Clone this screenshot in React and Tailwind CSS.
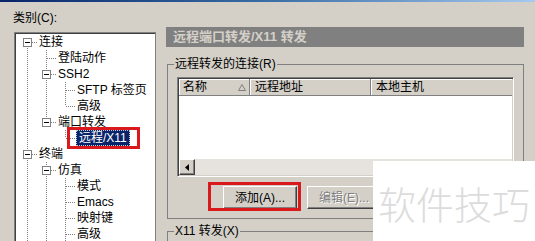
import React from 'react';

const tree = [
  { label: '连接', guides: [], open: true, first: true, last: false },
  { label: '登陆动作', guides: [true], open: false, last: false },
  { label: 'SSH2', guides: [true], open: true, last: false },
  { label: 'SFTP 标签页', guides: [true, true], open: false, last: false },
  { label: '高级', guides: [true, true], open: false, last: true },
  { label: '端口转发', guides: [true], open: true, last: true },
  { label: '远程/X11', guides: [true, false], open: false, last: true, selected: true },
  { label: '终端', guides: [], open: true, last: false },
  { label: '仿真', guides: [true], open: true, last: false },
  { label: '模式', guides: [true, true], open: false, last: false },
  { label: 'Emacs', guides: [true, true], open: false, last: false },
  { label: '映射键', guides: [true, true], open: false, last: false },
  { label: '高级', guides: [true, true], open: false, last: false },
];

// one 19x16 cell of the tree's dotted guide lines
const GuideCell = ({ line }) => (
  <svg width="19" height="16" className="shrink-0">
    {line && <line x1="9.5" y1="0" x2="9.5" y2="16" stroke="#808080" strokeDasharray="1 1" />}
  </svg>
);

const ConnectorCell = ({ first, last, open }) => (
  <svg width="19" height="16" className="shrink-0">
    {!first && <line x1="9.5" y1="0" x2="9.5" y2="8" stroke="#808080" strokeDasharray="1 1" />}
    {!last && <line x1="9.5" y1="8" x2="9.5" y2="16" stroke="#808080" strokeDasharray="1 1" />}
    <line x1="10" y1="8.5" x2="19" y2="8.5" stroke="#808080" strokeDasharray="1 1" />
    {open && (
      <>
        <rect x="5.5" y="4.5" width="8" height="8" fill="#fff" stroke="#808080" />
        <line x1="7" y1="8.5" x2="12" y2="8.5" stroke="#000" />
      </>
    )}
  </svg>
);

const TreeRow = ({ item }) => (
  <div className="flex items-center h-[16px]">
    {item.guides.map((g, i) => (
      <GuideCell key={i} line={g} />
    ))}
    <ConnectorCell first={item.first} last={item.last} open={item.open} />
    {item.selected ? (
      <span className="relative ml-[1px] px-[2px] h-[16px] leading-[16px] bg-[#0a246a] text-white border border-dotted border-[#c8c8d8] whitespace-nowrap flex items-center">
        {item.label}
        <span className="absolute -left-[10px] -right-[11px] -top-[4px] -bottom-[4px] border-[3px] border-[#d9191c]"></span>
      </span>
    ) : (
      <span className="ml-[1px] px-[1px] leading-[15px] text-black whitespace-nowrap">{item.label}</span>
    )}
  </div>
);

const raised =
  'border border-t-white border-l-white border-r-[#404040] border-b-[#404040] shadow-[inset_-1px_-1px_0_#808080]';

const App = () => {
  return (
    <div className="relative w-[535px] h-[241px] overflow-hidden bg-[#d4d0c8] text-[12px] text-black font-['Liberation_Sans','Noto_Sans_CJK_SC',sans-serif]">
      {/* window edge */}
      <div className="h-[2px] bg-gradient-to-r from-[#0a246a] via-[#3a6ea5] to-[#a6caf0]"></div>

      <div className="flex">
        {/* Category tree */}
        <div className="w-[166px] shrink-0 pl-[14px]">
          <div className="mt-[9px] -ml-[1px] leading-[14px] mb-[7px]">类别(C):</div>
          <div className="w-[142px] h-[220px] bg-white border border-[#808080] shadow-[inset_1px_1px_0_#404040] pl-[3px] pt-[1px]">
            {tree.map((item, i) => (
              <TreeRow key={i} item={item} />
            ))}
          </div>
        </div>

        {/* Right panel */}
        <div className="flex-1 pt-[25px]">
          <div className="w-[358px] h-[20px] bg-[#808080] pl-[7px] leading-[20px] text-[13px] font-bold text-[#d4d0c8]">
            远程端口转发/X11 转发
          </div>

          <fieldset className="mt-[10px] ml-[1px] w-[356px] border border-[#808080] px-[9px] pt-[6px] pb-[9px]">
            <legend className="-ml-[3px] px-[1px] leading-[14px]">远程转发的连接(R)</legend>

            <div className="w-[337px] h-[100px] flex flex-col bg-white border border-t-[#808080] border-l-[#808080] border-r-white border-b-white shadow-[inset_1px_1px_0_#404040,inset_-1px_-1px_0_#d4d0c8] p-[1px]">
              <div className="flex h-[17px] bg-[#d4d0c8] shrink-0">
                <div className="relative w-[71px] border-r border-b border-[#808080] shadow-[inset_1px_1px_0_#fff] pl-[4px] leading-[16px]">
                  名称
                  <svg width="8" height="7" className="absolute right-[3px] top-[5px]">
                    <polyline points="0.5,6.5 4,0.5 7.5,6.5 0.5,6.5" fill="none" stroke="#808080" />
                  </svg>
                </div>
                <div className="w-[121px] border-r border-b border-[#808080] shadow-[inset_1px_1px_0_#fff] pl-[5px] leading-[16px]">
                  远程地址
                </div>
                <div className="flex-1 border-b border-[#808080] shadow-[inset_1px_1px_0_#fff] pl-[5px] leading-[16px]">
                  本地主机
                </div>
              </div>
              <div className="flex-1"></div>
              <div className="flex h-[16px] bg-[#e6e3de] shrink-0">
                <div className={`w-[16px] h-[16px] bg-[#d4d0c8] flex items-center justify-center ${raised}`}>
                  <svg width="4" height="7">
                    <polygon points="4,0 0,3.5 4,7" fill="#000" />
                  </svg>
                </div>
              </div>
            </div>

            <div className="flex mt-[9px]">
              <button className={`relative ml-[46px] w-[74px] h-[23px] bg-[#d4d0c8] ${raised} leading-[20px]`}>
                添加(A)...
                <span className="absolute -left-[16px] -right-[5px] -top-[5px] -bottom-[3px] border-[3px] border-[#d9191c]"></span>
              </button>
              <button className={`ml-[10px] w-[74px] h-[23px] bg-[#d4d0c8] ${raised} leading-[20px] text-[#808080] [text-shadow:1px_1px_0_#fff]`}>
                编辑(E)...
              </button>
            </div>
          </fieldset>

          <fieldset className="mt-[5px] ml-[1px] w-[356px] h-[40px] border border-[#808080] px-[9px]">
            <legend className="-ml-[3px] px-[1px] leading-[14px]">X11 转发(X)</legend>
          </fieldset>
        </div>
      </div>

      {/* watermark */}
      <div className="absolute left-[373px] top-[161px] right-0 bottom-0 bg-white pl-[5px] pt-[23px]">
        <div className="text-[38px] leading-[38px] font-light text-[#dcdcdc] font-['Noto_Sans_CJK_SC',sans-serif] whitespace-nowrap">
          软件技巧
        </div>
      </div>
    </div>
  );
};

export default App;
